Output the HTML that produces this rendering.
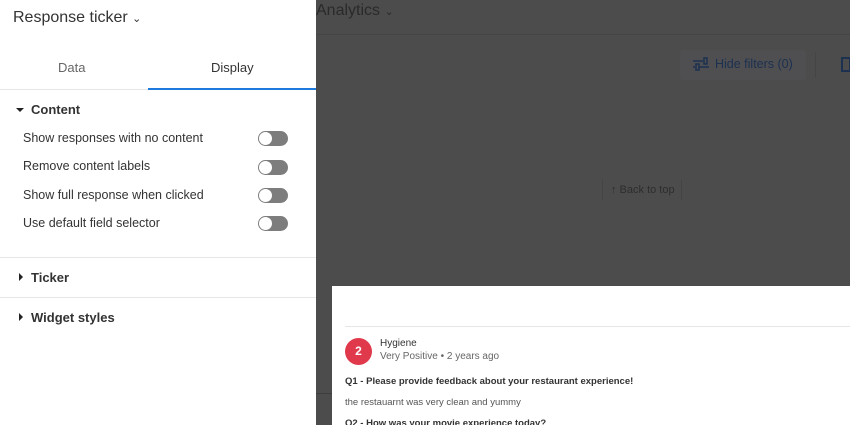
<!DOCTYPE html>
<html><head><meta charset="utf-8"><style>
*{margin:0;padding:0;box-sizing:border-box}
html,body{width:850px;height:425px;overflow:hidden}
body{background:#4c4c4c;font-family:"Liberation Sans",sans-serif;position:relative}
.abs{position:absolute}
.left{left:0;top:0;width:316px;height:425px;background:#fff}
.tog{position:absolute;left:258px;width:30px;height:15px;border-radius:8px;background:#7d7d7d}
.tog:after{content:"";position:absolute;left:1px;top:1px;width:13px;height:13px;border-radius:50%;background:#fff}
.lbl{position:absolute;left:23px;font-size:12.5px;color:#333}
.sec{position:absolute;left:31px;font-size:13px;font-weight:bold;color:#333}
.tri{position:absolute;left:19px;width:0;height:0;border-top:4px solid transparent;border-bottom:4px solid transparent;border-left:4px solid #222}
</style></head><body>
<div class="abs" style="left:316px;top:2px;font-size:16px;color:#2a2a2a">Analytics <span style="font-size:11px">&#8964;</span></div>
<div class="abs" style="left:316px;top:34px;width:534px;height:1px;background:#454545"></div>
<div class="abs" style="left:680px;top:50px;width:126px;height:30px;background:#4f4f52;border-radius:3px"></div>
<svg class="abs" style="left:692px;top:56px" width="18" height="16" viewBox="0 0 18 16"><g stroke="#1c3050" stroke-width="1.5" fill="none"><path d="M1 5h10M1 11h2M7 11h10"/><rect x="12" y="2" width="3" height="6"/><rect x="4" y="8" width="3" height="6"/></g></svg>
<div class="abs" style="left:715px;top:57px;font-size:12.5px;color:#1c3050">Hide filters (0)</div>
<div class="abs" style="left:815px;top:52px;width:1px;height:26px;background:#454545"></div>
<div class="abs" style="left:841px;top:57px;width:10px;height:15px;border:2px solid #1c3050"></div>
<div class="abs" style="left:602px;top:180px;width:1px;height:20px;background:#444"></div>
<div class="abs" style="left:681px;top:180px;width:1px;height:20px;background:#444"></div>
<div class="abs" style="left:611px;top:184px;font-size:11px;color:#2e2e2e">&#8593; Back to top</div>
<div class="abs" style="left:316px;top:393px;width:20px;height:1px;background:#3e3e3e"></div>
<div class="abs" style="left:332px;top:286px;width:518px;height:139px;background:#fff;overflow:hidden">
<div class="abs" style="left:13px;top:40px;width:505px;height:1px;background:#e6e6e6"></div>
<div class="abs" style="left:13px;top:52px;width:27px;height:27px;border-radius:50%;background:#e0394c;color:#fff;font-size:12px;font-weight:bold;text-align:center;line-height:27px">2</div>
<div class="abs" style="left:48px;top:52px;font-size:10px;color:#333">Hygiene</div>
<div class="abs" style="left:48px;top:65px;font-size:10px;color:#666">Very Positive &bull; 2 years ago</div>
<div class="abs" style="left:13px;top:90px;font-size:9.5px;font-weight:bold;color:#333">Q1 - Please provide feedback about your restaurant experience!</div>
<div class="abs" style="left:13px;top:111px;font-size:9.5px;color:#555">the restauarnt was very clean and yummy</div>
<div class="abs" style="left:13px;top:132px;font-size:9.5px;font-weight:bold;color:#333">Q2 - How was your movie experience today?</div>
</div>
<div class="abs left">
<div class="abs" style="left:13px;top:9px;font-size:16px;color:#333">Response ticker <span style="font-size:11px">&#8964;</span></div>
<div class="abs" style="left:58px;top:60px;font-size:13px;color:#666">Data</div>
<div class="abs" style="left:211px;top:60px;font-size:13px;color:#333">Display</div>
<div class="abs" style="left:0;top:89px;width:316px;height:1px;background:#e6e6e6"></div>
<div class="abs" style="left:148px;top:88px;width:168px;height:2px;background:#1f7ae0"></div>
<div class="abs" style="left:16px;top:108px;width:0;height:0;border-left:4px solid transparent;border-right:4px solid transparent;border-top:4px solid #222"></div>
<div class="sec" style="top:102px">Content</div>
<div class="lbl" style="top:131px">Show responses with no content</div><div class="tog" style="top:131px"></div>
<div class="lbl" style="top:159px">Remove content labels</div><div class="tog" style="top:160px"></div>
<div class="lbl" style="top:188px">Show full response when clicked</div><div class="tog" style="top:188px"></div>
<div class="lbl" style="top:216px">Use default field selector</div><div class="tog" style="top:216px"></div>
<div class="abs" style="left:0;top:257px;width:316px;height:1px;background:#e6e6e6"></div>
<div class="tri" style="top:273px"></div><div class="sec" style="top:270px">Ticker</div>
<div class="abs" style="left:0;top:297px;width:316px;height:1px;background:#e6e6e6"></div>
<div class="tri" style="top:313px"></div><div class="sec" style="top:310px">Widget styles</div>
</div>
</body></html>
